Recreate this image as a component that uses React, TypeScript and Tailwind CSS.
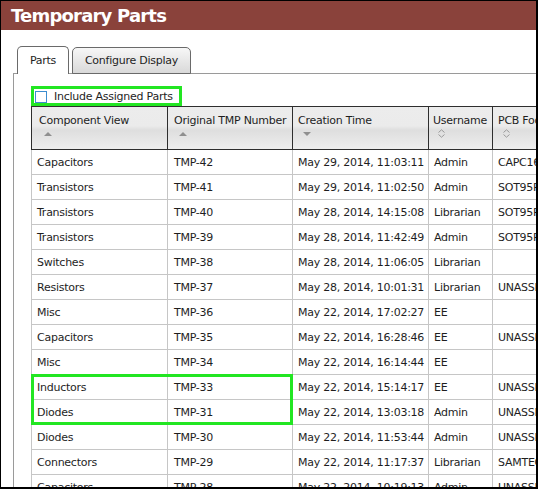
import React from "react";

const rows: [string, string, string, string, string][] = [
  ["Capacitors", "TMP-42", "May 29, 2014, 11:03:11", "Admin", "CAPC1608X90N"],
  ["Transistors", "TMP-41", "May 29, 2014, 11:02:50", "Admin", "SOT95P280X145-5N"],
  ["Transistors", "TMP-40", "May 28, 2014, 14:15:08", "Librarian", "SOT95P280X145-5N"],
  ["Transistors", "TMP-39", "May 28, 2014, 11:42:49", "Admin", "SOT95P280X145-5N"],
  ["Switches", "TMP-38", "May 28, 2014, 11:06:05", "Librarian", ""],
  ["Resistors", "TMP-37", "May 28, 2014, 10:01:31", "Librarian", "UNASSIGNED"],
  ["Misc", "TMP-36", "May 22, 2014, 17:02:27", "EE", ""],
  ["Capacitors", "TMP-35", "May 22, 2014, 16:28:46", "EE", "UNASSIGNED"],
  ["Misc", "TMP-34", "May 22, 2014, 16:14:44", "EE", ""],
  ["Inductors", "TMP-33", "May 22, 2014, 15:14:17", "EE", "UNASSIGNED"],
  ["Diodes", "TMP-31", "May 22, 2014, 13:03:18", "Admin", "UNASSIGNED"],
  ["Diodes", "TMP-30", "May 22, 2014, 11:53:44", "Admin", "UNASSIGNED"],
  ["Connectors", "TMP-29", "May 22, 2014, 11:17:37", "Librarian", "SAMTEC"],
  ["Capacitors", "TMP-28", "May 22, 2014, 10:19:13", "Admin", "UNASSIGNED"],
];

const widths = ["w-[136px]", "w-[125px]", "w-[136px]", "w-[64px]", "w-[130px]"];

function Up() {
  return (
    <svg width="8" height="4" viewBox="0 0 8 4">
      <path d="M0 4 L4 0 L8 4 Z" fill="#8f8f8f" />
    </svg>
  );
}
function Down() {
  return (
    <svg width="8" height="4" viewBox="0 0 8 4">
      <path d="M0 0 L4 4 L8 0 Z" fill="#8f8f8f" />
    </svg>
  );
}
function Both() {
  return (
    <svg width="7" height="9" viewBox="0 0 7 9">
      <path d="M0.5 3.5 L3.5 0.8 L6.5 3.5 M0.5 5.5 L3.5 8.2 L6.5 5.5" stroke="#9a9a9a" strokeWidth="1" fill="none" />
    </svg>
  );
}

const headers: [string, React.ReactNode, string][] = [
  ["Component View", <Up />, "pl-[7px]"],
  ["Original TMP Number", <Up />, "pl-[6px]"],
  ["Creation Time", <Down />, "pl-[5px]"],
  ["Username", <Both />, "pl-[4px]"],
  ["PCB Footprint", <Both />, "pl-[5px]"],
];

export default function App() {
  return (
    <div
      className="w-[538px] h-[489px] overflow-hidden border-t border-l border-r-2 border-b-2 border-black bg-white flex flex-col text-[11px] tracking-[-0.25px] text-[#1e1e1e]"
      style={{ fontFamily: '"DejaVu Sans", Verdana, sans-serif' }}
    >
      <div className="h-[29px] shrink-0 bg-[#8a423b] flex items-center pl-[10px]">
        <span className="text-white font-bold text-[18px] tracking-[-0.8px] leading-none mt-[1px]">Temporary Parts</span>
      </div>
      <div className="flex-1 flex flex-col pl-[12px] pt-[16px] min-h-0">
        <div className="flex items-end ml-[4px] gap-[3px] relative z-10 -mb-px">
          <div className="h-[28px] w-[52px] border border-b-0 border-[#6a6a6a] rounded-t-[5px] bg-white flex items-center justify-center pt-[1px]">
            Parts
          </div>
          <div className="h-[27px] w-[119px] border border-[#6a6a6a] rounded-t-[5px] bg-gradient-to-b from-[#f7f7f7] to-[#d9d9d9] flex items-center justify-center pt-[1px]">
            Configure Display
          </div>
        </div>
        <div className="flex-1 border-l border-t border-[#9a9a9a] pl-[17px] pt-[12px] min-h-0">
          <div className="w-[151px] h-[20px] border-[3px] border-[#22e622] flex items-center pl-[1px] pt-[2px]">
            <div className="w-[12px] h-[12px] border border-[#3c8dcf] bg-white shrink-0" />
            <span className="ml-[7px] whitespace-nowrap">Include Assigned Parts</span>
          </div>
          <div className="relative w-[600px]">
            <div className="flex h-[44px] border-t border-b border-l border-[#2e2e2e] bg-[linear-gradient(to_bottom,#ececec_0%,#ebebeb_45%,#dedede_55%,#eeeeee_100%)]">
              {headers.map(([label, icon, pl], i) => (
                <div
                  key={label}
                  className={`${widths[i]} shrink-0 border-r border-[#2e2e2e] flex flex-col ${pl} pt-[6px] whitespace-nowrap overflow-hidden`}
                >
                  <span className="leading-[15px]">{label}</span>
                  <span className="mt-[1px] ml-[5px] flex h-[9px] items-center">{icon}</span>
                </div>
              ))}
            </div>
            {rows.map((r, ri) => (
              <div key={ri} className="flex h-[25px] border-b border-l border-[#c6c6c6]">
                {r.map((c, ci) => (
                  <div
                    key={ci}
                    className={`${widths[ci]} shrink-0 border-r border-[#c6c6c6] flex items-center pt-[2px] whitespace-nowrap overflow-hidden ${ci === 1 ? "pl-[6px]" : "pl-[5px]"}`}
                  >
                    {c}
                  </div>
                ))}
              </div>
            ))}
            <div className="absolute left-0 top-[268px] w-[262px] h-[51px] border-[3px] border-[#22e622] pointer-events-none" />
          </div>
        </div>
      </div>
    </div>
  );
}
